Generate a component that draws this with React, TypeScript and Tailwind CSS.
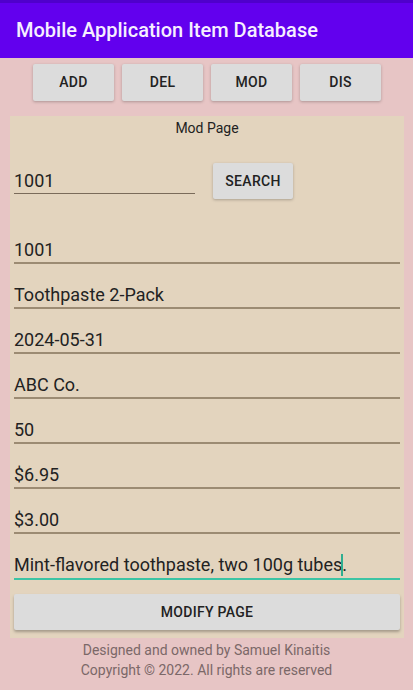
const tabs = ['ADD', 'DEL', 'MOD', 'DIS'];

const fields = ['1001', 'Toothpaste 2-Pack', '2024-05-31', 'ABC Co.', '50', '$6.95', '$3.00'];

export default function App() {
  return (
    <div
      className="w-[413px] h-[690px] bg-[#e7c5c5] overflow-hidden text-[#222]"
      style={{ fontFamily: 'Roboto, "Noto Sans", sans-serif' }}
    >
      {/* App bar */}
      <div className="h-[3px] bg-[#4f00cc]" />
      <div className="h-[55px] bg-[#6200ee] flex items-center px-[16px]">
        <span className="text-[20px] font-medium text-[#f6efff] leading-none -mt-[2px]">Mobile Application Item Database</span>
      </div>

      {/* Tabs */}
      <div className="flex justify-center gap-[8px] pt-[6px] pl-[1px]">
        {tabs.map((t) => (
          <button
            key={t}
            className="w-[81px] h-[37px] bg-[#dcdcdc] rounded-[2px] shadow-[0_1px_3px_rgba(0,0,0,0.25)] text-[14px] font-medium text-[#222] tracking-[0.3px]"
          >
            {t}
          </button>
        ))}
      </div>

      {/* Panel */}
      <div className="ml-[10px] mt-[15px] w-[394px] bg-[#e3d4be] px-[4px] pb-[8px]">
        <div className="h-[22px] flex items-end justify-center text-[14px] leading-[20px]">Mod Page</div>

        <div className="mt-[25px] flex items-start">
          <div className="w-[181px] h-[31px] border-b border-[#7a6b5a] flex items-end pb-[2px] text-[18px] leading-[21px]">1001</div>
          <button className="ml-[18px] w-[80px] h-[36px] bg-[#dcdcdc] rounded-[2px] shadow-[0_1px_3px_rgba(0,0,0,0.25)] text-[14px] font-medium tracking-[0.3px]">
            SEARCH
          </button>
        </div>

        <div className="mt-[20px]">
          {fields.map((f, i) => (
            <div key={i} className="h-[45px] border-b-2 border-[#9c8b73] flex items-end pb-[2px] text-[18px] leading-[21px]">
              {f}
            </div>
          ))}
          <div className="h-[46px] border-b-2 border-[#3cc4a4] flex items-end pb-[3px] text-[18px] leading-[21px]">
            <span>Mint-flavored toothpaste, two 100g tubes</span>
            <span className="relative">
              .
              <span className="absolute left-[-1px] bottom-[-1px] w-[2px] h-[22px] bg-[#2fae90]" />
            </span>
          </div>
        </div>

        <button className="mt-[14px] w-full h-[36px] bg-[#dcdcdc] rounded-[2px] shadow-[0_2px_3px_rgba(0,0,0,0.28)] text-[14px] font-medium tracking-[0.3px]">
          MODIFY PAGE
        </button>
      </div>

      {/* Footer */}
      <div className="mt-[2px] text-center text-[14px] leading-[20px] text-[#7b6868]">
        <div>Designed and owned by Samuel Kinaitis</div>
        <div>Copyright © 2022. All rights are reserved</div>
      </div>
    </div>
  );
}
